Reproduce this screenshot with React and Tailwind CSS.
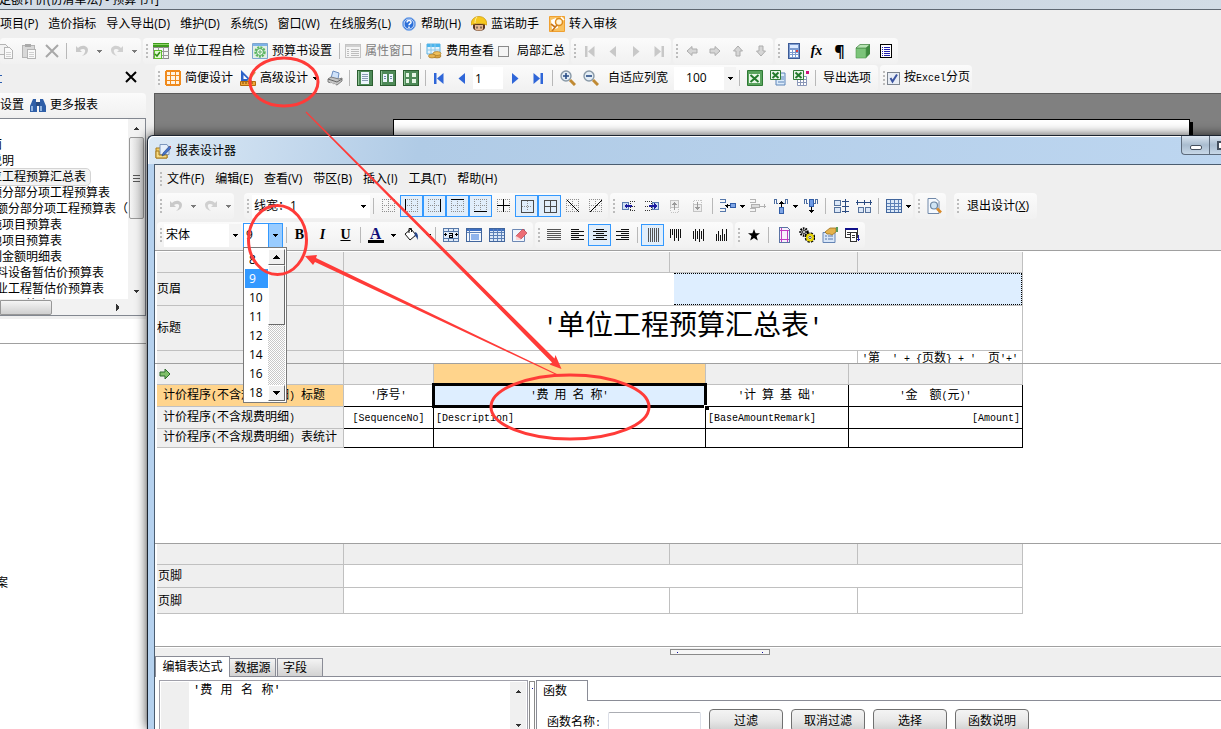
import React from 'react';
import clsx from 'clsx';

const GREY = '#b4b4b4';
const NAVY = '#2a4a80';

/* ---------- small building blocks ---------- */

const Svg = ({ children, w = 16, h = 16, soft }) => (
  <svg
    width={w}
    height={h}
    viewBox={`0 0 ${w} ${h}`}
    fill="none"
    shapeRendering={soft ? 'auto' : 'crispEdges'}
    className="shrink-0"
    aria-hidden="true"
  >
    {children}
  </svg>
);

const Grip = () => (
  <span className="flex w-[7px] shrink-0 flex-col items-center gap-0.5" aria-hidden="true">
    {[0, 1, 2, 3].map((i) => (
      <span key={i} className="size-0.5 bg-[#bcbcbc]" />
    ))}
  </span>
);

const Sep = () => (
  <span className="flex w-[7px] shrink-0 justify-center" aria-hidden="true">
    <span className="h-4 w-px bg-[#b8b8b8]" />
  </span>
);

const Caret = ({ muted }) => (
  <Svg w={5} h={3}>
    <path d="M0 0h5v1H4v1H3v1H2V2H1V1H0z" fill={muted ? '#7a7a7a' : '#000'} />
  </Svg>
);

const DropButton = ({ label, muted, wide }) => (
  <button
    type="button"
    aria-label={label}
    className={clsx('flex h-5 shrink-0 items-center justify-center', wide ? 'w-3' : 'w-[7px]')}
  >
    <Caret muted={muted} />
  </button>
);

const Tool = ({ label, active, children }) => (
  <button
    type="button"
    aria-label={label}
    title={label}
    aria-pressed={active}
    className={clsx(
      'flex h-[22px] w-[23px] shrink-0 items-center justify-center',
      active && 'border border-[#3399ff] bg-[#e1eefb]'
    )}
  >
    {children}
  </button>
);

const Group = ({ children, className }) => (
  <div
    className={clsx(
      'flex h-[26px] shrink-0 items-center rounded-sm bg-linear-to-b from-[#fbfbfb] to-[#f1f1f1]',
      className
    )}
  >
    {children}
  </div>
);

const TextTool = ({ icon, children, muted }) => (
  <button type="button" className={clsx('flex shrink-0 items-center gap-1', muted && 'text-[#7d7d7d]')}>
    {icon}
    {children}
  </button>
);

// Half-width characters take half of a 12px cell in the report font.
const Song = ({ text }) => (
  <span className="whitespace-pre font-['Liberation_Mono','Noto_Sans_CJK_SC',monospace]">
    {text.split(/([\x20-\x7e]+)/).map((run, i) =>
      i % 2 ? (
        <span key={i} className="text-[10px]">
          {run}
        </span>
      ) : (
        run
      )
    )}
  </span>
);

/* ---------- icons ---------- */

const CopyIcon = () => (
  <Svg>
    <path d="M1.5 1.5h6l2 2v8h-8z" fill="#f2f2f2" stroke={GREY} />
    <path d="M6.5 4.5h5l3 3v8h-8z" fill="#fafafa" stroke={GREY} />
    <path d="M8 9h5M8 11h5M8 13h5" stroke="#d0d0d0" />
  </Svg>
);
const PasteIcon = () => (
  <Svg>
    <path d="M1.5 2.5h12v12h-12z" fill="#d8d8d8" stroke={GREY} />
    <path d="M4 1h6v3H4z" fill="#aaa" />
    <path d="M6.5 6.5h8v9h-8z" fill="#fafafa" stroke={GREY} />
    <path d="M8 9h5M8 11h5M8 13h5" stroke="#d0d0d0" />
  </Svg>
);
const CrossIcon = () => (
  <Svg soft>
    <path d="M2 2l12 12M14 2L2 14" stroke="#a8a8a8" strokeWidth="2" />
  </Svg>
);
const UndoIcon = () => (
  <Svg soft>
    <path d="M2 3v6h6L6 7c3-2 6-1 5 2-.5 2-2 3-3 4 4-1 6-3 6-6 0-4-6-6-10-2z" fill="#c9c9c9" />
  </Svg>
);
const RedoIcon = () => (
  <Svg soft>
    <path d="M14 3v6H8l2-2c-3-2-6-1-5 2 .5 2 2 3 3 4-4-1-6-3-6-6 0-4 6-6 10-2z" fill="#d0d0d0" />
  </Svg>
);
const CheckTableIcon = () => (
  <Svg>
    <path d="M0 0h16v4H0z" fill="#3d9b1c" />
    <path d="M0 1h16v1H0z" fill="#8fd468" />
    <path d="M.5 4.5h15v11H.5z" fill="#f6f6f6" stroke="#8a8a8a" />
    <path d="M5.5 4v12M10.5 4v12M0 8.5h16M0 12.5h16" stroke="#9a9a9a" />
    <path d="M1 7h7v8H1z" fill="#e4f7d6" stroke="#5fbf2d" />
    <path d="M2 11l2 2 3-4" stroke="#2d8a10" strokeWidth="1.5" shapeRendering="auto" />
  </Svg>
);
const GearIcon = () => (
  <Svg soft>
    <path d="M.5.5h15v15H.5z" fill="#e3efe6" stroke="#7ea6cf" />
    <path d="M1 1h14v2H1z" fill="#7db2e8" />
    <circle cx="8" cy="9" r="4.5" stroke="#5cb860" strokeWidth="2.4" strokeDasharray="2 1" />
    <circle cx="8" cy="9" r="3.4" fill="#f4fff4" stroke="#4ba654" />
    <circle cx="8" cy="9" r="1.2" stroke="#4ba654" />
  </Svg>
);
const PropsIcon = () => (
  <Svg>
    <path d="M.5 1.5h15v13H.5z" fill="#f5f5f5" stroke="#c4c4c4" />
    <path d="M1 2h14v2H1z" fill="#d0d0d0" />
    <path d="M2 6h2M6 6h8M2 8h2M6 8h8M2 10h2M6 10h8M2 12h2M6 12h8" stroke="#bdbdbd" />
  </Svg>
);
const FeeIcon = () => (
  <Svg soft>
    <path d="M1 1h13v10H1z" fill="#e4f3fc" stroke="#5fb2e0" />
    <path d="M1 1h13v3H1z" fill="#4cb5ec" />
    <path d="M1 7h13M5 1v10M9 1v10" stroke="#8ac8ea" />
    <ellipse cx="11" cy="13" rx="4" ry="2" fill="#d9a441" stroke="#9c6d1c" strokeWidth=".6" />
    <ellipse cx="11" cy="10.5" rx="4" ry="2" fill="#efc15c" stroke="#9c6d1c" strokeWidth=".6" />
    <ellipse cx="6" cy="13" rx="3.5" ry="2" fill="#e5b34f" stroke="#9c6d1c" strokeWidth=".6" />
  </Svg>
);
const Nav = ({ dir, bar, color }) => (
  <Svg soft>
    <g transform={dir === 'left' ? undefined : 'matrix(-1 0 0 1 16 0)'}>
      {bar && <path d="M3 3h2.5v11H3z" fill={color} />}
      <path d={bar ? 'M12.5 3v11L6 8.5z' : 'M11 3v11L4.5 8.5z'} fill={color} />
    </g>
  </Svg>
);
const ArrowIcon = ({ rotate }) => (
  <Svg soft>
    <g transform={`rotate(${rotate} 8 8)`}>
      <path d="M3 8l5-4.5V6h5v4H8v2.5z" fill="#d6d6d6" stroke="#adadad" />
    </g>
  </Svg>
);
const CalcIcon = () => (
  <Svg>
    <path d="M2.5.5h11v15h-11z" fill="#7c9bd0" stroke="#3c5a96" />
    <path d="M4 2h8v3H4z" fill="#dbe9ff" />
    <path d="M4 7h2v2H4zM7 7h2v2H7zM4 10h2v1H4zM7 10h2v1H7zM10 10h2v1h-2zM4 12h2v2H4zM7 12h2v2H7zM10 12h2v2h-2z" fill="#fff" />
    <path d="M10 7h2v2h-2z" fill="#e23d3d" />
  </Svg>
);
const CubeIcon = () => (
  <Svg soft>
    <path d="M1 5l4-3.5h10V11l-4 4H1z" fill="#3f8a3f" />
    <path d="M1 5h10v10H1z" fill="#7cc47a" stroke="#4f9a4f" strokeWidth=".6" />
    <path d="M1 5l4-3.5h10L11 5z" fill="#b6e3b2" stroke="#3a7a3a" strokeWidth=".6" />
  </Svg>
);
const SheetListIcon = () => (
  <Svg>
    <path d="M2.5 1.5h11v13h-11z" fill="#fff" stroke="#000" />
    <path d="M4 4.5h1M6 4.5h6M4 6.5h1M6 6.5h6M4 8.5h1M6 8.5h6M4 10.5h1M6 10.5h6M4 12.5h1M6 12.5h6" stroke="#2222b0" />
  </Svg>
);
const HelpIcon = () => (
  <Svg soft>
    <circle cx="8" cy="8" r="6.5" fill="#2b6fd8" stroke="#8db5ec" />
    <circle cx="8" cy="8" r="5" stroke="#fff" strokeWidth=".8" />
    <path d="M6 6.500c0-3 4.500-2.500 4 0-.3 1.200-2 1.200-2 2.800M8 10.500v1.500" stroke="#fff" strokeWidth="1.500" />
  </Svg>
);
const WorkerIcon = () => (
  <Svg soft>
    <path d="M2 8h12v4c-1 4-11 4-12 0z" fill="#5a3520" />
    <path d="M4 9h8v4c-1 2-7 2-8 0z" fill="#e8b890" />
    <path d="M0 9c0-5 3-8.500 8-8.500S16 4 16 9c-5-2-11-2-16 0z" fill="#f6c81e" stroke="#c99508" strokeWidth=".7" />
    <path d="M6 10.500v2M10 10.500v2" stroke="#222" />
    <path d="M6 1c-1.500 1.500-2 4-2 6" stroke="#fdeea0" />
  </Svg>
);
const AuditIcon = () => (
  <Svg soft>
    <path d="M.5.5h15v15H.5z" fill="#f9c15e" stroke="#f0a030" />
    <path d="M2 4l5-2 2 10-6 2z" fill="#fff" />
    <circle cx="10" cy="6" r="3.500" fill="#fff3d8" stroke="#dd8c1c" strokeWidth="1.500" />
    <path d="M8 9l-5 6M2 8l4 3" stroke="#c8761a" strokeWidth="1.600" />
    <path d="M12 1l3 3" stroke="#fff" strokeWidth="1.500" />
  </Svg>
);
const OrangeGridIcon = () => (
  <Svg>
    <path d="M0 1h1V0h14v1h1v14h-1v1H1v-1H0z" fill="#f08a1c" />
    <path d="M2 2h3v3H2zM6 2h4v3H6zM11 2h3v3h-3zM2 6h3v4H2zM6 6h4v4H6zM11 6h3v4h-3zM2 11h3v3H2zM6 11h4v3H6zM11 11h3v3h-3z" fill="#fff3e2" />
  </Svg>
);
const RulerIcon = () => (
  <Svg soft>
    <path d="M1 0v11h11z" fill="#2c62c8" />
    <path d="M3.500 5v4h4z" fill="#fff" />
    <path d="M15 2l-7 9" stroke="#caa14a" strokeWidth="2" />
    <path d="M.5 11.500h15v4H.5z" fill="#f0a63a" stroke="#b26c0c" />
    <path d="M3 12v2M6 12v2M9 12v2M12 12v2" stroke="#7a4a06" />
  </Svg>
);
const PrinterIcon = () => (
  <Svg soft>
    <path d="M4 8L6 1l6 2-1 6z" fill="#cfe2fa" stroke="#6e8fc0" />
    <path d="M1 9l3-2 8 2 3-1v3l-5 4-9-3z" fill="#c4c4c4" stroke="#808080" />
    <path d="M1 9l9 3 5-3" stroke="#666" />
    <path d="M3 13l6 2" stroke="#eee" />
  </Svg>
);
const GreenPage = ({ pages }) => (
  <Svg>
    <path d="M.5.5h15v15H.5z" fill="#4e8a58" stroke="#2b5e30" />
    <path d="M1 1h1v14H1z" fill="#8fc295" />
    {pages === 1 && <path d="M4 2h8v12H4z" fill="#eef6fd" />}
    {pages === 1 && <path d="M5 4.500h6M5 6.500h6M5 8.500h6M5 10.500h6" stroke="#8a9db5" />}
    {pages === 2 && <path d="M3 4h4v8H3zM9 4h4v8H9z" fill="#eef6fd" />}
    {pages === 2 && <path d="M4 6.500h2M4 8.500h2M10 6.500h2M10 8.500h2" stroke="#6d87a8" />}
    {pages === 4 && <path d="M3 3h3v4H3zM9 3h4v4H9zM3 9h3v4H3zM9 9h4v4H9z" fill="#e6f6e6" />}
  </Svg>
);
const ZoomGlass = ({ plus }) => (
  <Svg soft>
    <circle cx="6" cy="6" r="5" fill="#e3edf5" stroke="#8a9aa8" strokeWidth="1.400" />
    <path d={plus ? 'M3 6h6M6 3v6' : 'M3 6h6'} stroke="#274c86" strokeWidth="1.600" />
    <path d="M10 10l5 5" stroke="#c08a34" strokeWidth="3" />
  </Svg>
);
const ExcelIcon = ({ kind }) => (
  <Svg soft>
    {kind === 'copy' && <path d="M6 3h9v12H6z" fill="#dcebfa" stroke="#5d84b8" />}
    {kind === 'copy' && <path d="M11 7h3M11 9h3M8 12h6" stroke="#5d84b8" />}
    {kind === 'grid' && <path d="M4.500 6.500h9v9h-9zM4 9.500h10M4 12.500h10M7.500 6v10M10.500 6v10" fill="#fff" stroke="#8a97b8" />}
    {kind === 'grid' && <path d="M13 1h3v3h-3z" fill="#d0107a" />}
    <path
      d={kind ? 'M.5.5h10v9H.5z' : 'M.5.5h15v15H.5z'}
      fill={kind ? '#eaf6ea' : '#5aa45e'}
      stroke="#2f7a35"
    />
    {!kind && <path d="M2 4h11v9H2z" fill="#e9f7e9" />}
    <path d={kind ? 'M2.500 2.500l6 5.500M8.500 2.500l-6 5.500' : 'M3.500 5l8 7M11.500 5l-8 7'} stroke="#237a2c" strokeWidth="2" />
  </Svg>
);
const BinocularsIcon = () => (
  <Svg soft>
    <path d="M3 2h3v3l1 2v8H0V9zM13 2h-3v3L9 7v8h7V9z" fill="#2f5fa8" />
    <path d="M6 5h4v4H6z" fill="#274a80" />
    <path d="M2 9v5M11 9v5" stroke="#b5d2f4" strokeWidth="1.500" />
  </Svg>
);
const DesignerIcon = () => (
  <Svg soft>
    <path d="M1 5h4l1-2h6v12H1z" fill="#f3cf62" stroke="#a77b1c" />
    <path d="M5 1.500h7l2 3v7H5z" fill="#e6f0fc" stroke="#7d97bd" />
    <path d="M1 8h3v4h8v3H1z" fill="#f7dc84" stroke="#a77b1c" />
    <path d="M14.500 3L8 10l-1 3 3-1.500L16 5z" fill="#4672c8" stroke="#27447c" strokeWidth=".6" />
    <path d="M14.500 3L16 5l.5-2z" fill="#e0403a" />
  </Svg>
);

const BorderIcon = ({ on, inner }) => (
  <Svg>
    <path
      d={inner ? 'M3 8.500h10M8.500 3v10' : 'M1 1.500h14M1 13.500h14M1.500 1v13M13.500 1v13M1 7.500h13M7.500 1v13'}
      stroke="#8e8e8e"
      strokeDasharray="1 1"
    />
    <path d={on} stroke={inner ? '#4a4a4a' : '#000'} />
  </Svg>
);
const borderTools = [
  { label: '无边框', on: '' },
  { label: '左边框', on: 'M1.500 1v13', active: true },
  { label: '右边框', on: 'M13.500 1v13', active: true },
  { label: '上边框', on: 'M1 1.500h13', active: true },
  { label: '下边框', on: 'M1 13.500h13', active: true },
  { label: '内边框', on: 'M1 7.500h13M7.500 1v13' },
  { label: '外边框', on: 'M2.500 2.500h12v12h-12z', active: true, inner: true },
  { label: '全部边框', on: 'M2.500 2.500h12v12h-12zM2 8.500h12M8.500 2v12', active: true, inner: true },
  { label: '斜线', on: 'M2 2l12 12' },
  { label: '反斜线', on: 'M14 2L2 14' },
];

const InsertIcon = ({ kind }) => (
  <Svg>
    {kind === 'left' && <path d="M9 3.500h6M9 12.500h6M9 8h6M9.500 3v10" stroke="#333" strokeDasharray="1 1" />}
    {kind === 'left' && <path d="M1.500 4.500h6v7h-6z" fill="#cfe0f5" stroke="#5b7dae" />}
    {kind === 'left' && <path d="M3 8l3-3v2h5v2H6v2z" fill="#1b1ba0" />}
    {kind === 'right' && <path d="M1 3.500h6M1 12.500h6M1 8h6M7.500 3v10" stroke="#333" strokeDasharray="1 1" />}
    {kind === 'right' && <path d="M8.500 4.500h6v7h-6z" fill="#cfe0f5" stroke="#5b7dae" />}
    {kind === 'right' && <path d="M13 8l-3-3v2H5v2h5v2z" fill="#1b1ba0" />}
    {(kind === 'up' || kind === 'down') && (
      <g transform={kind === 'up' ? undefined : 'matrix(1 0 0 -1 0 16)'}>
        <path d="M3.500 2.500h8v7h-8z" fill="#eee" stroke="#c4c4c4" />
        <path d="M3.500 10v4h8v-4" stroke="#c4c4c4" strokeDasharray="1 1" />
        <path d="M7 4h1v8H7zM6 5h3v1H6zM5 6h5v1H5z" fill="#9a9a9a" />
      </g>
    )}
  </Svg>
);
const MergeRight = ({ muted }) => (
  <Svg>
    <path d="M0 1.500h5.500v3H0M0 10.500h5.500v3H0" stroke={muted ? GREY : '#5577aa'} />
    {muted ? (
      <path d="M1.500 6.500h8v3h-8zM10 8h6M14 6v4" fill="#ddd" stroke="#b0b0b0" />
    ) : (
      <path d="M5 7.500h6M7.500 6v4M6.500 7v2" stroke="#000" />
    )}
    {!muted && <path d="M10.500 5.500h5v4h-5z" fill="#7fa6e6" stroke="#2f5ca8" />}
  </Svg>
);
const MergeUp = ({ down }) => (
  <Svg>
    <path d="M1 1.500h2.500v4H5M1.500 1v5M15 1.500h-2.500v4H11M14.500 1v5" stroke="#4b6ca0" />
    {down ? (
      <>
        <path d="M6.500 1.500h4v7h-4z" fill="#6d9ae6" stroke="#2f5ca8" />
        <path d="M8 9h1v6H8zM6 12h5v1H6zM7 13h3v1H7z" fill="#000" />
      </>
    ) : (
      <>
        <path d="M6.500 9.500h4v6h-4z" fill="#7fa6e6" stroke="#2f5ca8" />
        <path d="M8 3h1v6H8zM7 4h3v1H7zM6 5h5v1H6z" fill="#000" />
      </>
    )}
  </Svg>
);
const SplitIcon = ({ turn }) => (
  <Svg>
    <g transform={turn ? 'matrix(0 1 1 0 0 0)' : undefined}>
      <path
        d={turn ? 'M9.500 2.500h5v5h-5zM9.500 9.500h5v5h-5z' : 'M1.500 2.500h6v5h-6zM1.500 9.500h6v5h-6z'}
        fill="#dce8f8"
        stroke="#56729c"
      />
      <path
        d={turn ? 'M4.500 0v16M2 1.500h5M2 8.500h5M2 14.500h5' : 'M12.500 1v14M9 3.500h7M9 8.500h7M9 13.500h7'}
        stroke={NAVY}
      />
    </g>
  </Svg>
);
const GridIcon = ({ cols, head }) => (
  <Svg>
    <path d="M.5 1.500h15v13H.5z" fill={cols ? '#dce9f8' : '#f4f8fd'} stroke="#41659c" />
    {head && <path d="M1 2h14v2H1z" fill="#3c6fc4" />}
    <path d={cols ? 'M1 5.500h14M1 8.500h14M1 11.500h14M4.500 2v12M8.500 2v12M12.500 2v12' : 'M1 5.500h14M3.500 2v12'} stroke="#5c80b6" />
    {!cols && <path d="M5 7h8v6H5z" fill="#8fb4ec" />}
  </Svg>
);
const FitIcon = () => (
  <Svg>
    <path d="M.5 1.500h15v13H.5z" fill="#dfeaf8" stroke="#5678a8" />
    <path d="M1 4.500h14M1 11.500h14M5.500 1v3M10.500 1v3M5.500 12v3M10.500 12v3" stroke="#5678a8" />
    <path d="M1 7.500h3M2.500 6v3M12 7.500h3M13.500 6v3" stroke="#000" />
    <path d="M6 6.500h3.500v4H6.500v-2h3" stroke="#000" />
  </Svg>
);
const EraserIcon = () => (
  <Svg soft>
    <path d="M.5 2.500h12v12H.5z" fill="#f0f5fc" stroke="#6d88b4" />
    <path d="M11 2l4 4-6 6-4-1-1-2z" fill="#ec6d74" stroke="#b03540" strokeWidth=".6" />
    <path d="M4 9l5 3-2 1H4z" fill="#fbd5d6" />
  </Svg>
);
const LinesIcon = ({ d, color = '#111' }) => (
  <Svg>
    <path d={d} stroke={color} />
  </Svg>
);
const BucketIcon = () => (
  <Svg soft>
    <path d="M2 7l6-5 5 6-6 5z" fill="#fff" stroke="#111" />
    <path d="M6 6V1.500h2.500V5" stroke="#111" />
    <path d="M12 5c3 1 3.500 4 2.500 8-1-3-1.500-4-3-4z" fill="#27478c" />
  </Svg>
);
const PageFrameIcon = () => (
  <Svg>
    <path d="M3.500.5h8l2 2v13h-10z" fill="#f6f0fc" stroke="#5b73a4" />
    <path d="M5.500 1v14M11.500 3v12M4 3.500h9M4 12.500h9" stroke="#c23ac2" />
  </Svg>
);
const CogsIcon = () => (
  <Svg soft>
    <circle cx="5" cy="5" r="3.500" fill="#ddd" stroke="#000" strokeWidth="2.400" strokeDasharray="1.500 1" />
    <circle cx="5" cy="5" r="1.500" fill="#fff" stroke="#000" strokeWidth=".8" />
    <circle cx="11" cy="10.500" r="3.800" stroke="#000" strokeWidth="3" strokeDasharray="2 1" />
    <circle cx="11" cy="10.500" r="3" fill="#fff8b0" stroke="#e8d400" strokeWidth="2" />
    <circle cx="11" cy="10.500" r="1.200" fill="#fff" stroke="#333" strokeWidth=".8" />
  </Svg>
);
const HandIcon = () => (
  <Svg soft>
    <path d="M1 5.500h12v10H1z" fill="#d8e6f8" stroke="#6484b4" />
    <path d="M3 9h2M6 9h5M3 12h2M6 12h5" stroke="#5878ac" />
    <path d="M3 5l5-4h6v4l-4 3-2-1H5z" fill="#e5b24c" stroke="#9c7220" strokeWidth=".8" />
    <path d="M14 0h2v5h-2z" fill="#5a9a5a" />
  </Svg>
);
const DocsIcon = () => (
  <Svg>
    <path d="M.5 1.500h12v9H.5z" fill="#fff" stroke="#333" />
    <path d="M0 1h13v2H0z" fill="#10108a" />
    <path d="M2 5.500h3M2 7.500h3" stroke="#333" />
    <path d="M5.500 5.500h6v9h-6z" fill="#fff" stroke="#333" />
    <path d="M7 8.500h3M7 10.500h3" stroke="#333" />
    <path d="M13 8h1v6h-1zM12 12h3v1h-3z" fill="#1b1bb0" />
  </Svg>
);
const PreviewIcon = () => (
  <Svg soft>
    <path d="M2 .5h8l3 3v12H2z" fill="#f5f9fe" stroke="#7088a8" />
    <circle cx="8" cy="7.500" r="3.500" fill="#cfe4f4" stroke="#6a84a0" strokeWidth="1.200" />
    <path d="M11 10.500l4 4" stroke="#d88a2a" strokeWidth="2.600" />
  </Svg>
);

/* ---------- background application ---------- */

const mainMenu = [
  { text: '项目(P)' },
  { text: '造价指标' },
  { text: '导入导出(D)' },
  { text: '维护(D)' },
  { text: '系统(S)' },
  { text: '窗口(W)' },
  { text: '在线服务(L)' },
  { text: '帮助(H)', icon: <HelpIcon /> },
  { text: '蓝诺助手', icon: <WorkerIcon /> },
  { text: '转入审核', icon: <AuditIcon /> },
];

const reports = [
  { name: '封面' },
  { name: '总说明' },
  { name: '单位工程预算汇总表', selected: true },
  { name: '定额分部分项工程预算表' },
  { name: '定额分部分项工程预算表（', nudge: true },
  { name: '措施项目预算表' },
  { name: '其他项目预算表' },
  { name: '暂列金额明细表' },
  { name: '材料设备暂估价预算表', nudge: true },
  { name: '专业工程暂估价预算表', nudge: true },
  { name: '计日工预算表' },
];

const MainToolbar = () => (
  <div className="flex h-[27px] shrink-0 items-start gap-0.5">
    <Group className="w-[141px]">
      <div className="-ml-1.5 flex items-center">
        <Tool label="复制"><CopyIcon /></Tool>
        <Tool label="粘贴"><PasteIcon /></Tool>
        <Tool label="删除"><CrossIcon /></Tool>
        <Sep />
        <Tool label="撤销"><UndoIcon /></Tool>
        <DropButton label="撤销列表" muted wide />
        <Tool label="重做"><RedoIcon /></Tool>
        <DropButton label="重做列表" muted wide />
      </div>
    </Group>
    <Group className="w-[426px]">
      <Grip />
      <div className="flex items-center gap-[7px] pl-[3px]">
        <TextTool icon={<CheckTableIcon />}>单位工程自检</TextTool>
        <TextTool icon={<GearIcon />}>预算书设置</TextTool>
      </div>
      <span className="w-1" />
      <Sep />
      <span className="w-0.5" />
      <TextTool icon={<PropsIcon />} muted>属性窗口</TextTool>
      <span className="w-1" />
      <Sep />
      <span className="w-0.5" />
      <TextTool icon={<FeeIcon />}>费用查看</TextTool>
      <label className="ml-1 flex items-center gap-2">
        <input type="checkbox" className="size-[11px] appearance-none border border-[#8a8a8a] bg-[#f4f4f4]" />
        局部汇总
      </label>
    </Group>
    <Group className="w-[100px]">
      <Grip />
      <Tool label="首条"><Nav dir="left" bar color="#c8c8c8" /></Tool>
      <Tool label="上一条"><Nav dir="left" color="#c8c8c8" /></Tool>
      <Tool label="下一条"><Nav dir="right" color="#c8c8c8" /></Tool>
      <Tool label="末条"><Nav dir="right" bar color="#c8c8c8" /></Tool>
    </Group>
    <Group className="w-[100px]">
      <Grip />
      <Tool label="左移"><ArrowIcon rotate={0} /></Tool>
      <Tool label="右移"><ArrowIcon rotate={180} /></Tool>
      <Tool label="上移"><ArrowIcon rotate={90} /></Tool>
      <Tool label="下移"><ArrowIcon rotate={270} /></Tool>
    </Group>
    <Group className="w-[123px]">
      <Grip />
      <Tool label="计算器"><CalcIcon /></Tool>
      <Tool label="函数">
        <span className="font-['Liberation_Serif',serif] text-sm font-bold italic">fx</span>
      </Tool>
      <Tool label="段落"><span className="text-base font-bold">¶</span></Tool>
      <Tool label="模型"><CubeIcon /></Tool>
      <Tool label="列表"><SheetListIcon /></Tool>
    </Group>
  </div>
);

const ReportToolbar = () => (
  <div className="flex h-7 shrink-0 items-start gap-0.5 pl-px">
    <Group className="w-[723px]">
      <Grip />
      <div className="flex items-center gap-[7px] pl-[3px]">
        <TextTool icon={<OrangeGridIcon />}>简便设计</TextTool>
        <TextTool icon={<RulerIcon />}>高级设计</TextTool>
      </div>
      <span className="w-1" />
      <DropButton label="高级设计选项" />
      <span className="w-1" />
      <Tool label="打印"><PrinterIcon /></Tool>
      <Sep />
      <Tool label="单页"><GreenPage pages={1} /></Tool>
      <Tool label="双页"><GreenPage pages={2} /></Tool>
      <Tool label="四页"><GreenPage pages={4} /></Tool>
      <Sep />
      <div className="-ml-0.5 flex items-center">
        <Tool label="首页"><Nav dir="left" bar color="#2f66d8" /></Tool>
        <Tool label="上一页"><Nav dir="left" color="#2f66d8" /></Tool>
        <input aria-label="页码" defaultValue="1" className="h-[22px] w-[30px] bg-white px-0.5" />
        <Tool label="下一页"><Nav dir="right" color="#2f66d8" /></Tool>
        <Tool label="末页"><Nav dir="right" bar color="#2f66d8" /></Tool>
        <Sep />
        <Tool label="放大"><ZoomGlass plus /></Tool>
        <Tool label="缩小"><ZoomGlass /></Tool>
      </div>
      <button type="button" className="mx-1.5 shrink-0">自适应列宽</button>
      <div className="flex h-[23px] w-[62px] shrink-0 bg-white">
        <input aria-label="缩放比例" defaultValue="100" className="w-[50px] pl-3" />
        <button type="button" aria-label="选择比例" className="flex w-3 items-center justify-center bg-[#f4f4f4]">
          <Caret />
        </button>
      </div>
      <Sep />
      <Tool label="导出Excel"><ExcelIcon /></Tool>
      <Tool label="批量导出"><ExcelIcon kind="copy" /></Tool>
      <Tool label="导出表格"><ExcelIcon kind="grid" /></Tool>
      <Sep />
      <button type="button" className="ml-1 shrink-0">导出选项</button>
    </Group>
    <Group className="pr-0.5">
      <Grip />
      <label className="flex items-center gap-1">
        <span className="relative flex size-[13px]">
          <input
            type="checkbox"
            defaultChecked
            className="size-[13px] appearance-none border border-[#7e8690] bg-[#e8edf5]"
          />
          <svg className="pointer-events-none absolute inset-0" width="13" height="13" fill="none" aria-hidden="true">
            <path d="M3.500 6l2 3.500L10 2.500" stroke="#3b54a0" strokeWidth="2" />
          </svg>
        </span>
        <Song text="按Excel分页" />
      </label>
    </Group>
  </div>
);

const ScrollArrow = ({ dir }) => (
  <Svg w={7} h={7}>
    {dir === 'up' && <path d="M3 2h1v1H3zM2 3h3v1H2zM1 4h5v1H1z" fill="#333" />}
    {dir === 'down' && <path d="M1 2h5v1H1zM2 3h3v1H2zM3 4h1v1H3z" fill="#333" />}
    {dir === 'right' && <path d="M2 0h1v7H2zM3 1h1v5H3zM4 2h1v3H4z" fill="#333" />}
  </Svg>
);

const Sidebar = () => (
  <aside className="flex w-[146px] shrink-0 flex-col">
    <div className="flex h-7 items-start justify-between pt-1">
      <span className="mt-1.5 h-2 w-0.5 border-y border-[#2a5db0]" />
      <button type="button" aria-label="关闭" className="mt-0.5 mr-[9px]">
        <Svg w={12} h={12} soft>
          <path d="M1 1l10 10M11 1L1 11" stroke="#000" strokeWidth="2" />
        </Svg>
      </button>
    </div>
    <div className="flex h-[23px] items-center gap-1.5 overflow-hidden rounded-r-sm bg-linear-to-b from-[#fbfbfb] to-[#f1f1f1]">
      <button type="button">设置</button>
      <TextTool icon={<BinocularsIcon />}>更多报表</TextTool>
    </div>
    <div className="mt-0.5 mb-[3px] flex h-[198px] flex-col border border-l-0 border-[#828790] bg-white">
      <div className="flex min-h-0 flex-1">
        <ul className="flex-1 overflow-hidden pt-[18px]">
          {reports.map(({ name, selected, nudge }) => (
            <li key={name + nudge} className={clsx('-ml-[22px] h-4 leading-4 whitespace-nowrap', nudge && 'pl-1.5')}>
              <span
                className={clsx(
                  'inline-block h-4',
                  selected && 'rounded-sm bg-[#f3f3f3] pr-1 outline outline-[#d4d4d4]'
                )}
              >
                {name}
              </span>
            </li>
          ))}
        </ul>
        <div className="flex w-[17px] flex-col items-center bg-[#f2f2f2]">
          <span className="flex h-[18px] items-center"><ScrollArrow dir="up" /></span>
          <span className="flex h-[82px] w-[15px] flex-col items-center justify-center gap-0.5 rounded-xs border border-[#979797] bg-linear-to-r from-[#f5f5f5] to-[#cfcfcf]">
            <span className="h-px w-[7px] bg-[#555]" />
            <span className="h-px w-[7px] bg-[#555]" />
            <span className="h-px w-[7px] bg-[#555]" />
          </span>
          <span className="mt-auto flex h-4 items-center"><ScrollArrow dir="down" /></span>
        </div>
      </div>
      <div className="flex h-4 items-center bg-[#f2f2f2] pr-6">
        <span className="h-[15px] w-[52px] rounded-r-xs border border-[#979797] bg-linear-to-b from-[#f5f5f5] to-[#cfcfcf]" />
        <span className="ml-auto"><ScrollArrow dir="right" /></span>
      </div>
    </div>
    <div className="flex-1 overflow-hidden bg-white">
      <div className="h-[25px] border-b border-[#a0a0a0]" />
      <p className="-ml-1 pt-[231px]">案</p>
    </div>
  </aside>
);

/* ---------- report designer window ---------- */

const designerMenu = ['文件(F)', '编辑(E)', '查看(V)', '带区(B)', '插入(I)', '工具(T)', '帮助(H)'];
const sizes = [8, 9, 10, 11, 12, 14, 16, 18];

const DesignerToolbar = () => (
  <div className="flex h-[29px] shrink-0 items-start gap-0.5 pl-0.5">
    <Group className="w-[77px]">
      <Grip />
      <Tool label="撤销"><UndoIcon /></Tool>
      <DropButton label="撤销列表" muted wide />
      <Tool label="重做"><RedoIcon /></Tool>
      <DropButton label="重做列表" muted wide />
    </Group>
    <Group className="ml-2 w-[364px]">
      <Grip />
      <div className="relative flex h-[23px] w-[119px] shrink-0 items-center pl-px">
        <select aria-label="线宽" className="size-full appearance-none bg-white pl-0.5">
          <option>线宽：1</option>
        </select>
        <span className="pointer-events-none absolute right-1"><Caret /></span>
      </div>
      <Sep />
      {borderTools.map(({ label, on, active, inner }) => (
        <Tool key={label} label={label} active={active}>
          <BorderIcon on={on} inner={inner} />
        </Tool>
      ))}
    </Group>
    <Group className="w-[303px]">
      <Grip />
      <Tool label="左侧插入列"><InsertIcon kind="left" /></Tool>
      <Tool label="右侧插入列"><InsertIcon kind="right" /></Tool>
      <Tool label="上方插入行"><InsertIcon kind="up" /></Tool>
      <Tool label="下方插入行"><InsertIcon kind="down" /></Tool>
      <Sep />
      <Tool label="向右合并"><MergeRight /></Tool>
      <DropButton label="向右合并选项" />
      <Tool label="取消合并"><MergeRight muted /></Tool>
      <Tool label="向上合并"><MergeUp /></Tool>
      <DropButton label="向上合并选项" />
      <Tool label="向下合并"><MergeUp down /></Tool>
      <Sep />
      <Tool label="等高"><SplitIcon /></Tool>
      <Tool label="等宽"><SplitIcon turn /></Tool>
      <Sep />
      <Tool label="表格"><GridIcon cols /></Tool>
      <DropButton label="表格选项" />
    </Group>
    <Group className="w-[31px]">
      <Grip />
      <Tool label="预览"><PreviewIcon /></Tool>
    </Group>
    <Group className="ml-1.5 w-[83px]">
      <Grip />
      <button type="button" className="ml-1.5 shrink-0">退出设计(<u>X</u>)</button>
    </Group>
  </div>
);

const SizeCombo = () => (
  <div className="relative ml-0.5 flex h-[25px] w-10 shrink-0 border border-[#3399ff] bg-white">
    <input aria-label="字号" defaultValue="9" className="w-6 pl-0.5" />
    <button
      type="button"
      aria-label="选择字号"
      className="flex flex-1 items-center justify-center border-l border-[#3399ff] bg-[#99ccff]"
    >
      <Caret />
    </button>
    <div className="absolute top-full -left-px z-10 flex h-[156px] w-[44px] border border-[#7a7a7a] bg-white p-px">
      <ul role="listbox" aria-label="字号列表" className="flex-1 pt-px">
        {sizes.map((n) => (
          <li
            key={n}
            role="option"
            aria-selected={n === 9}
            className={clsx('h-[19px] pl-1 leading-[19px]', n === 9 && 'bg-[#3399ff] text-white')}
          >
            {n}
          </li>
        ))}
      </ul>
      <div className="flex w-[17px] flex-col bg-[repeating-conic-gradient(#c8c8c8_0_25%,#fff_0_50%)] bg-size-[2px_2px]">
        <span className="flex h-4 items-center justify-center border border-t-white border-r-[#696969] border-b-[#696969] border-l-white bg-[#f0f0f0]">
          <Svg w={7} h={4}><path d="M3 0h1v1H3zM2 1h3v1H2zM1 2h5v1H1zM0 3h7v1H0z" fill="#000" /></Svg>
        </span>
        <span className="h-[60px] border border-t-white border-r-[#696969] border-b-[#696969] border-l-white bg-[#f0f0f0]" />
        <span className="mt-auto flex h-4 items-center justify-center border border-t-white border-r-[#696969] border-b-[#696969] border-l-white bg-[#f0f0f0]">
          <Svg w={7} h={4}><path d="M0 0h7v1H0zM1 1h5v1H1zM2 2h3v1H2zM3 3h1v1H3z" fill="#000" /></Svg>
        </span>
      </div>
    </div>
  </div>
);

const FormatToolbar = () => (
  <div className="flex h-[28px] shrink-0 items-start gap-0.5 pl-0.5">
    <Group className="w-[376px]">
      <Grip />
      <div className="relative flex h-[23px] w-[77px] shrink-0 items-center">
        <select aria-label="字体" className="size-full appearance-none bg-white pl-0.5">
          <option>宋体</option>
        </select>
        <span className="pointer-events-none absolute right-0 flex h-full w-3 items-center justify-center bg-[#f4f4f4]">
          <Caret />
        </span>
      </div>
      <SizeCombo />
      <Sep />
      <div className="-ml-0.5 flex font-['Liberation_Serif',serif] text-sm font-bold">
        <Tool label="加粗">B</Tool>
        <Tool label="倾斜"><i>I</i></Tool>
        <Tool label="下划线"><u>U</u></Tool>
      </div>
      <Sep />
      <Tool label="字体颜色">
        <span className="w-4 border-b-3 border-black font-['Liberation_Serif',serif] text-base leading-[13px] font-bold text-[#10107a]">
          A
        </span>
      </Tool>
      <DropButton label="字体颜色选项" wide />
      <Tool label="填充颜色"><BucketIcon /></Tool>
      <DropButton label="填充颜色选项" wide />
      <div className="-ml-0.5 flex items-center">
        <Sep />
        <Tool label="自动适应"><FitIcon /></Tool>
        <Tool label="合并单元格"><GridIcon head /></Tool>
        <Tool label="拆分单元格"><GridIcon cols head /></Tool>
        <Tool label="清除"><EraserIcon /></Tool>
      </div>
    </Group>
    <Group className="w-[198px]">
      <Grip />
      <Tool label="两端对齐"><LinesIcon color="#555" d="M1 2.500h14M1 4.500h14M1 6.500h14M1 8.500h14M1 10.500h14M1 12.500h14" /></Tool>
      <Tool label="左对齐"><LinesIcon d="M2 2.500h8M2 4.500h13M2 6.500h8M2 8.500h13M2 10.500h8M2 12.500h13" /></Tool>
      <Tool label="居中" active><LinesIcon d="M4 2.500h8M1 4.500h14M4 6.500h8M1 8.500h14M4 10.500h8M1 12.500h14" /></Tool>
      <Tool label="右对齐"><LinesIcon d="M6 2.500h8M1 4.500h13M6 6.500h8M1 8.500h13M6 10.500h8M1 12.500h13" /></Tool>
      <Sep />
      <Tool label="垂直撑满" active><LinesIcon color="#555" d="M3.500 1v14M5.500 1v14M7.500 1v14M9.500 1v14M11.500 1v14M13.500 1v14" /></Tool>
      <Tool label="顶端对齐"><LinesIcon d="M2.500 2v9M4.500 2v6M6.500 2v12M8.500 2v9M10.500 2v12M12.500 2v9" /></Tool>
      <Tool label="垂直居中"><LinesIcon d="M2.500 4v8M4.500 2v12M6.500 4v8M8.500 2v13M10.500 4v8M12.500 2v12" /></Tool>
      <Tool label="底端对齐"><LinesIcon d="M2.500 7v7M4.500 4v10M6.500 8v6M8.500 2v12M10.500 7v7M12.500 2v12" /></Tool>
    </Group>
    <Group className="w-[130px]">
      <Grip />
      <Tool label="收藏">
        <Svg soft>
          <path d="M8 2l1.600 4.300H14L10.500 9l1.300 4.500L8 11l-3.800 2.500L5.500 9 2 6.300h4.400z" fill="#000" />
        </Svg>
      </Tool>
      <Sep />
      <Tool label="页面设置"><PageFrameIcon /></Tool>
      <Tool label="设置"><CogsIcon /></Tool>
      <Tool label="属性"><HandIcon /></Tool>
      <Tool label="文档结构"><DocsIcon /></Tool>
    </Group>
  </div>
);

const label = 'border-r border-b border-[#c0c0c0] bg-[#efefef] text-left';
const grey = 'border-r border-b border-[#c0c0c0] bg-[#efefef]';
const light = 'border-r border-b border-[#c0c0c0]';
const dark = 'border-r border-b border-black';
const tableClass = 'w-[866px] table-fixed border-separate border-spacing-0 leading-4';

const Cols = ({ inner }) =>
  inner ? (
    <colgroup>
      <col className="w-[187px]" />
      <col className="w-[90px]" />
      <col className="w-[272px]" />
      <col className="w-[143px]" />
      <col className="w-[174px]" />
    </colgroup>
  ) : (
    <colgroup>
      <col className="w-[187px]" />
      <col className="w-[326px]" />
      <col className="w-[188px]" />
      <col className="w-[165px]" />
    </colgroup>
  );

const Canvas = () => (
  <div className="shrink-0 border-t border-[#a0a0a0] bg-white">
    <div className="h-[113px] overflow-hidden border-b border-[#a0a0a0] pt-px pl-0.5">
      <table className={tableClass}>
        <Cols />
        <tbody>
          <tr className="h-[21px]">
            <td className={grey} />
            <td className={grey} />
            <td className={grey} />
            <td className={grey} />
          </tr>
          <tr className="h-[33px]">
            <td className={label}>页眉</td>
            <td colSpan={3} className={light}>
              <div className="ml-[330px] h-8 border border-l-0 border-dotted border-black bg-[#deeeff]" />
            </td>
          </tr>
          <tr className="h-[45px]">
            <td className={label}>标题</td>
            <td colSpan={3} className={clsx(light, 'text-center')}>
              <div className="font-['Liberation_Mono','Noto_Sans_CJK_SC',monospace] text-[28px] leading-8">
                <span className="text-[23px]">'</span>单位工程预算汇总表<span className="text-[23px]">'</span>
              </div>
            </td>
          </tr>
          <tr className="h-[21px]">
            <td className={label} />
            <td className={light} colSpan={2} />
            <td className={clsx(light, 'pl-1 align-top leading-[14px]')}>
              <Song text="'第  ' + {页数} + '  页'+'" />
            </td>
          </tr>
        </tbody>
      </table>
    </div>
    <div className="h-[180px] border-b border-[#a0a0a0] pl-0.5">
      <table className={tableClass}>
        <Cols inner />
        <tbody>
          <tr className="h-[21px]">
            <td className={clsx(grey, 'pl-0.5')}>
              <svg width="12" height="12" className="block" aria-hidden="true">
                <path d="M1 4h5V1l5 5-5 5V8H1z" fill="#7fbf6a" stroke="#2d6b2d" />
              </svg>
            </td>
            <td className={grey} />
            <td className={clsx(light, 'bg-[#ffd48c]')} />
            <td className={grey} />
            <td className={grey} />
          </tr>
          <tr className="h-[22px]">
            <td className={clsx(light, 'bg-[#ffd48c] pl-1.5')}><Song text="计价程序(不含规费明细) 标题" /></td>
            <td className={clsx(dark, 'text-center')}><Song text="'序号'" /></td>
            <td className={clsx(dark, 'relative bg-[#deeeff] text-center')}>
              <Song text="'费 用 名 称'" />
              <span className="absolute -inset-0.5 border-3 border-black" />
              <span className="absolute -right-1 -bottom-1 size-[5px] border-t border-l border-white bg-black" />
            </td>
            <td className={clsx(dark, 'text-center')}><Song text="'计 算 基 础'" /></td>
            <td className={clsx(dark, 'text-center')}><Song text="'金  额(元)'" /></td>
          </tr>
          <tr className="h-[22px]">
            <td className={clsx(label, 'pl-1.5')}><Song text="计价程序(不含规费明细)" /></td>
            <td className={clsx(dark, 'text-center')}><Song text="[SequenceNo]" /></td>
            <td className={clsx(dark, 'pl-0.5')}><Song text="[Description]" /></td>
            <td className={clsx(dark, 'pl-0.5')}><Song text="[BaseAmountRemark]" /></td>
            <td className={clsx(dark, 'pr-0.5 text-right')}><Song text="[Amount]" /></td>
          </tr>
          <tr className="h-[19px]">
            <td className={clsx(label, 'pl-1.5')}><Song text="计价程序(不含规费明细) 表统计" /></td>
            <td className={dark} />
            <td className={dark} />
            <td className={dark} />
            <td className={dark} />
          </tr>
        </tbody>
      </table>
    </div>
    <div className="h-[103px] border-b border-[#a0a0a0] pl-0.5">
      <table className={tableClass}>
        <Cols />
        <tbody>
          <tr className="h-[21px]">
            <td className={grey} />
            <td className={grey} />
            <td className={grey} />
            <td className={grey} />
          </tr>
          <tr className="h-[23px]">
            <td className={clsx(label, 'pl-px')}>页脚</td>
            <td className={light} colSpan={3} />
          </tr>
          <tr className="h-[26px]">
            <td className={clsx(label, 'pl-px')}>页脚</td>
            <td className={light} />
            <td className={light} />
            <td className={light} />
          </tr>
        </tbody>
      </table>
    </div>
  </div>
);

const ExpressionPanel = () => (
  <>
    <div className="flex h-[9px] shrink-0 justify-center border-t border-white pl-14">
      <div className="my-px flex w-[100px] items-center justify-between border border-[#8a8a8a] bg-[#f6f6f6] px-1.5">
        <span className="size-px bg-[#1010a0]" />
        <span className="size-px bg-[#1010a0]" />
      </div>
    </div>
    <div role="tablist" className="flex h-[21px] shrink-0 items-end border-b border-[#8a8c96]">
      <button role="tab" aria-selected="true" type="button" className="-mb-px h-[21px] w-[75px] border border-b-0 border-[#8a8c96] bg-white">
        编辑表达式
      </button>
      <button role="tab" aria-selected="false" type="button" className="h-[18px] w-[46px] border border-b-0 border-l-0 border-[#8a8c96] bg-linear-to-b from-[#f4f4f4] to-[#d2d2d2]">
        数据源
      </button>
      <button role="tab" aria-selected="false" type="button" className="ml-px h-[18px] w-[46px] border border-b-0 border-[#8a8c96] bg-linear-to-b from-[#f4f4f4] to-[#d2d2d2] pr-2.5">
        字段
      </button>
    </div>
    <div className="flex min-h-0 flex-1 bg-white pt-[3px] pl-1">
      <div className="flex w-[369px] shrink-0 border border-b-0 border-[#a0a0aa] p-px pb-0">
        <div className="w-7 shrink-0 bg-[#efefef]" />
        <div className="flex-1 pl-1 font-['Liberation_Mono','Noto_Sans_CJK_SC',monospace] leading-4 whitespace-pre">
          {"'费 用 名 称'".split(' ').map((word, i) => (
            <React.Fragment key={i}>
              {i > 0 && <span className="text-sm leading-4"> </span>}
              {word}
            </React.Fragment>
          ))}
        </div>
        <div className="flex w-4 flex-col items-center justify-between bg-[#f0f0f0] pt-1.5">
          <ScrollArrow dir="up" />
          <ScrollArrow dir="down" />
        </div>
      </div>
      <div className="mt-px ml-px flex w-1.5 shrink-0 justify-center border border-b-0 border-[#8a8a8a] pt-1.5">
        <span className="size-px bg-[#1010a0]" />
      </div>
      <div className="ml-px min-w-0 flex-1 border-l border-[#8a8c96]">
        <div className="flex h-[21px]">
          <button role="tab" aria-selected="true" type="button" className="w-[51px] border-t border-r border-[#8a8c96] pr-3.5">
            函数
          </button>
          <div className="flex-1 border-b border-[#8a8c96]" />
        </div>
        <div className="flex items-start gap-2 pt-2 pl-2.5">
          <label htmlFor="fn" className="w-[53px] shrink-0 pt-[5px] leading-4 whitespace-nowrap">
            <Song text="函数名称:" />
          </label>
          <input id="fn" className="mt-[3px] h-5 w-[93px] shrink-0 rounded-xs border border-[#dcdfe8] border-t-[#abadb3]" />
          {['过滤', '取消过滤', '选择', '函数说明'].map((text) => (
            <button
              key={text}
              type="button"
              className="h-[23px] w-[74px] shrink-0 rounded-sm border border-[#707070] bg-linear-to-b from-[#f4f4f4] via-[#e8e8e8] to-[#cfcfcf]"
            >
              {text}
            </button>
          ))}
        </div>
      </div>
    </div>
  </>
);

const DesignerWindow = () => (
  <section
    aria-label="报表设计器"
    className="absolute top-[135px] -right-2 bottom-0 left-[147px] flex flex-col rounded-tl-md border-t border-l border-[#1c2430] bg-[#b5d1ee] pl-[6px] shadow-[0_0_12px_rgba(0,0,0,0.75)]"
  >
    <header className="-ml-[6px] flex h-[28px] shrink-0 items-start rounded-tl-md border-t border-l border-white bg-linear-100 from-[#dce9f5] via-[#b0cbe6] via-25% to-[#bdd6f0] pl-[6px]">
      <h1 className="flex items-center gap-[5px] pt-1.5">
        <DesignerIcon />
        报表设计器
      </h1>
      <div className="-mt-px mr-2 ml-auto flex h-[19px] overflow-hidden rounded-bl-sm border border-t-0 border-r-0 border-[#5d6b7c] bg-linear-to-b from-[#dbe5f0] via-[#a9bccf] to-[#c8d8e8]">
        <button type="button" aria-label="最小化" className="flex w-7 items-end justify-center border-r border-[#5d6b7c] pb-1">
          <span className="h-[5px] w-3 rounded-xs border border-[#45505e] bg-white" />
        </button>
        <button type="button" aria-label="最大化" className="flex w-[11px] items-end justify-end overflow-hidden pb-1">
          <span className="h-[9px] w-1 shrink-0 border-2 border-r-0 border-[#45505e] bg-white" />
        </button>
      </div>
    </header>
    <div className="flex min-h-0 flex-1 flex-col border-t border-l border-[#4b5d70] bg-[#efefef]">
      <nav className="flex h-[28px] shrink-0 items-center gap-[11px] pl-0.5">
        <Grip />
        {designerMenu.map((item, i) => (
          <button key={item} type="button" className={clsx('shrink-0', i === 0 && '-ml-2')}>
            {item}
          </button>
        ))}
      </nav>
      <DesignerToolbar />
      <FormatToolbar />
      <Canvas />
      <ExpressionPanel />
    </div>
  </section>
);

const Annotations = () => (
  <svg
    className="pointer-events-none absolute top-0 left-0 z-20"
    width="700"
    height="460"
    fill="none"
    stroke="#ff3b38"
    strokeWidth="3"
    aria-hidden="true"
  >
    <ellipse cx="284" cy="82" rx="34" ry="24" />
    <ellipse cx="277.500" cy="240" rx="29" ry="34.500" />
    <ellipse cx="570" cy="407" rx="79" ry="32" />
    <g fill="#ff3b38" stroke="none">
      <path d="M305.600 112.400l.8-.8L554.500 358.500l1-3.500 6 14-12-4.500 2.500-2z" />
      <path d="M558 374.600l-.4.800L315 262l-2 3-8-9 12-1-1 3z" />
    </g>
  </svg>
);

export default function App() {
  return (
    <div className="relative flex h-screen flex-col overflow-hidden bg-[#efefef] font-['Open_Sans','Noto_Sans_CJK_SC',sans-serif] text-xs text-black">
      <div className="flex h-2.5 shrink-0 items-end overflow-hidden border-b border-[#5f6872] bg-linear-to-r from-[#d3dde7] via-[#c6d2dd] to-[#d2dce6] pb-[3px]">
        <span className="-ml-px leading-3 whitespace-nowrap">定额计价(仿清单法) - 预算书1]</span>
      </div>
      <nav className="flex h-7 shrink-0 items-center gap-2.5">
        {mainMenu.map(({ text, icon }) => (
          <button key={text} type="button" className="flex shrink-0 items-center gap-1">
            {icon}
            {text}
          </button>
        ))}
      </nav>
      <MainToolbar />
      <div className="flex min-h-0 flex-1 gap-2">
        <Sidebar />
        <main className="flex min-w-0 flex-1 flex-col">
          <ReportToolbar />
          <div className="flex-1 border-t border-l border-[#5a5a5a] bg-[#808080] pt-[25px] pr-[31px] pl-[238px]">
            <div className="h-full border border-b-0 border-black bg-white shadow-[3px_3px_0_#000]" />
          </div>
        </main>
      </div>
      <DesignerWindow />
      <Annotations />
    </div>
  );
}
